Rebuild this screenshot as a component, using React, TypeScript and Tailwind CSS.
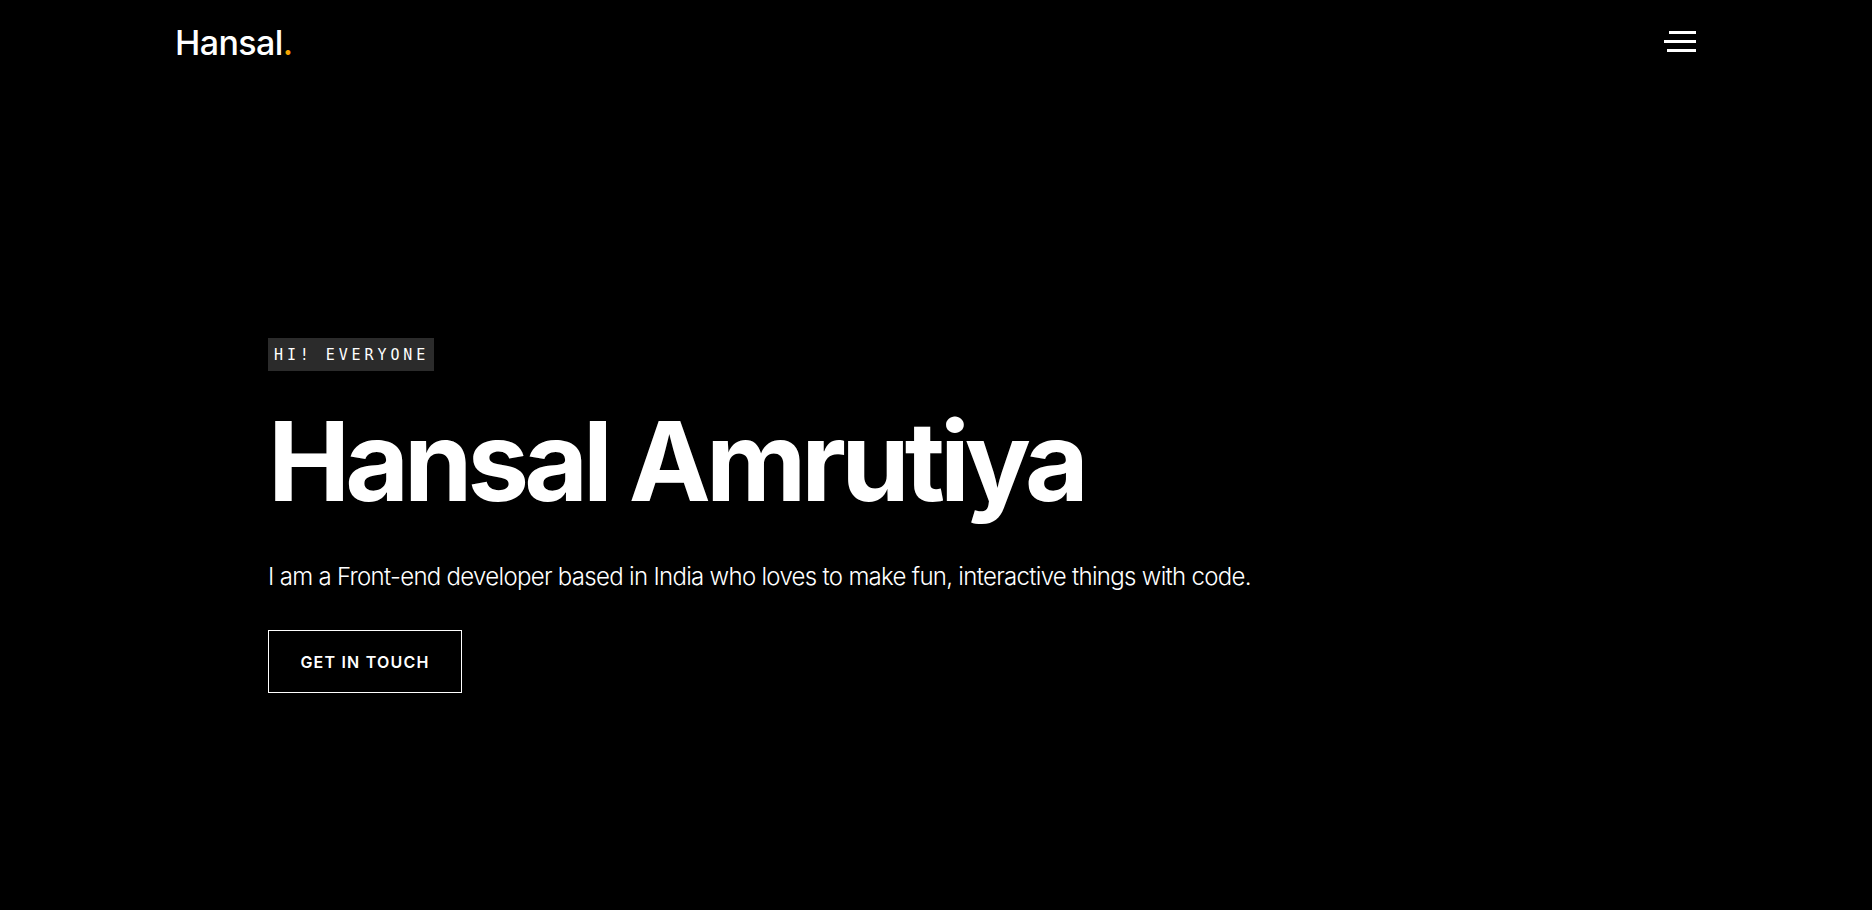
import React from "react";

export default function App() {
  return (
    <div className="min-h-[910px] w-full bg-black text-white" style={{ fontFamily: "Inter, 'Noto Sans', sans-serif" }}>
      <header className="flex h-[86px] items-center justify-between pl-[175px] pr-[176px]">
        <div className="text-[34px] font-medium leading-none tracking-[-0.6px]">
          Hansal<span className="text-[#f5a300]">.</span>
        </div>
        <button className="flex w-[32px] flex-col items-end gap-[6px] -mt-[4px]" aria-label="menu">
          <span className="block h-[3px] w-[27px] bg-white" />
          <span className="block h-[3px] w-[32px] bg-white" />
          <span className="block h-[3px] w-[29px] bg-white" />
        </button>
      </header>
      <main className="pl-[268px] pt-[252px]">
        <div
          className="inline-flex h-[33px] w-[166px] items-center pl-[6px] pt-[1px] text-[15px] font-normal tracking-[3.9px] bg-[#2b2b2b]"
          style={{ fontFamily: "'DejaVu Sans Mono', 'Liberation Mono', monospace" }}
        >
          HI! EVERYONE
        </div>
        <h1 className="mt-[30px] text-[110px] font-bold leading-[1.1] tracking-[-5px]">Hansal Amrutiya</h1>
        <p className="mt-[43px] text-[24px] font-light leading-none tracking-[-0.7px]">
          I am a Front-end developer based in India who loves to make fun, interactive things with code.
        </p>
        <button className="mt-[41px] flex h-[63px] w-[194px] items-center justify-center border border-white text-[16px] font-semibold tracking-[1.2px]">
          GET IN TOUCH
        </button>
      </main>
    </div>
  );
}
